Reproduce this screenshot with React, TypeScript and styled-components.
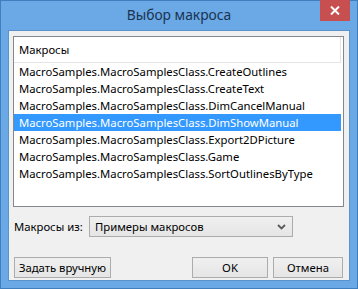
import React from "react";
import styled, { createGlobalStyle } from "styled-components";

const Global = createGlobalStyle`
  html, body { margin: 0; padding: 0; background: #ffffff; }
  body { font-family: "Noto Sans", "Open Sans", sans-serif; }
  * { box-sizing: border-box; }
`;

const Window = styled.div`
  width: 358px;
  height: 289px;
  background: #6aa9e6;
  border: 1px solid #3f7fc0;
  display: flex;
  flex-direction: column;
  padding: 0 7px 7px 7px;
`;

const TitleBar = styled.div`
  position: relative;
  flex: 0 0 29px;
  display: flex;
  align-items: center;
  justify-content: center;
  color: #1b3350;
  font-size: 13.8px;
  font-family: "Noto Sans", sans-serif;
  padding-bottom: 2px;
`;

const CloseButton = styled.div`
  position: absolute;
  top: -1px;
  right: 0;
  width: 30px;
  height: 21px;
  background: #c74f4f;
  display: flex;
  align-items: center;
  justify-content: center;
`;

const Client = styled.div`
  flex: 1;
  background: #f0f0f0;
  border: 1px solid #5b93cc;
  display: flex;
  flex-direction: column;
  padding: 5px 5px 0 4px;
  font-size: 11.3px;
  color: #000;
`;

const ListBox = styled.div`
  flex: 0 0 171px;
  background: #fff;
  border: 1px solid #828790;
  display: flex;
  flex-direction: column;
`;

const Header = styled.div`
  flex: 0 0 26px;
  display: flex;
  align-items: center;
  border-bottom: 1px solid #e5e5e5;
  padding-left: 5px;
  margin-right: 2px;
  border-right: 1px solid #e5e5e5;
`;

const Row = styled.div<{ $selected?: boolean }>`
  flex: 0 0 17px;
  display: flex;
  align-items: center;
  padding-left: 5px;
  margin-right: 2px;
  white-space: nowrap;
  background: ${(p) => (p.$selected ? "#3399ff" : "transparent")};
  color: ${(p) => (p.$selected ? "#fff" : "#000")};
`;

const SourceRow = styled.div`
  flex: 0 0 auto;
  display: flex;
  align-items: center;
  margin-top: 9px;
  padding-left: 1px;
`;

const Label = styled.span`
  width: 75px;
`;

const Combo = styled.div`
  width: 204px;
  height: 21px;
  border: 1px solid #acacac;
  background: linear-gradient(#f0f0f0, #e5e5e5);
  display: flex;
  align-items: center;
  justify-content: space-between;
  padding: 0 6px 0 5px;
`;

const ButtonRow = styled.div`
  flex: 0 0 auto;
  display: flex;
  align-items: center;
  margin-top: 20px;
  padding-left: 1px;
`;

const Button = styled.div<{ $w: number; $ml?: number }>`
  width: ${(p) => p.$w}px;
  margin-left: ${(p) => p.$ml ?? 0}px;
  height: 21px;
  border: 1px solid #acacac;
  background: linear-gradient(#f0f0f0, #e5e5e5);
  display: flex;
  align-items: center;
  justify-content: center;
  font-size: 11.3px;
`;

const items = [
  "MacroSamples.MacroSamplesClass.CreateOutlines",
  "MacroSamples.MacroSamplesClass.CreateText",
  "MacroSamples.MacroSamplesClass.DimCancelManual",
  "MacroSamples.MacroSamplesClass.DimShowManual",
  "MacroSamples.MacroSamplesClass.Export2DPicture",
  "MacroSamples.MacroSamplesClass.Game",
  "MacroSamples.MacroSamplesClass.SortOutlinesByType",
];

export default function App() {
  return (
    <>
      <Global />
      <Window>
        <TitleBar>
          Выбор макроса
          <CloseButton>
            <svg width="10" height="9" viewBox="0 0 10 9">
              <path d="M1 0.5 L9 8.5 M9 0.5 L1 8.5" stroke="#fff" strokeWidth="2" />
            </svg>
          </CloseButton>
        </TitleBar>
        <Client>
          <ListBox>
            <Header>Макросы</Header>
            {items.map((t, i) => (
              <Row key={t} $selected={i === 3}>
                {t}
              </Row>
            ))}
          </ListBox>
          <SourceRow>
            <Label>Макросы из:</Label>
            <Combo>
              <span>Примеры макросов</span>
              <svg width="9" height="6" viewBox="0 0 9 6">
                <path d="M1 1 L4.5 4.5 L8 1" stroke="#5a5a5a" strokeWidth="1.8" fill="none" />
              </svg>
            </Combo>
          </SourceRow>
          <ButtonRow>
            <Button $w={97}>Задать вручную</Button>
            <Button $w={76} $ml={81}>OK</Button>
            <Button $w={70} $ml={5}>Отмена</Button>
          </ButtonRow>
        </Client>
      </Window>
    </>
  );
}
